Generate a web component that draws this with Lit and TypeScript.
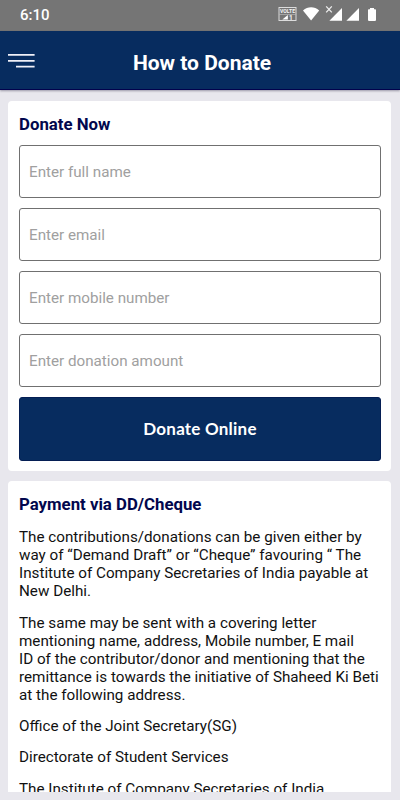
import { LitElement, html, css } from "lit";
import { customElement } from "lit/decorators.js";

const FIELDS = ["Enter full name", "Enter email", "Enter mobile number", "Enter donation amount"];

const PARAGRAPHS = [
  [
    "The contributions/donations can be given either by",
    "way of “Demand Draft” or “Cheque” favouring “ The",
    "Institute of Company Secretaries of India payable at",
    "New Delhi.",
  ],
  [
    "The same may be sent with a covering letter",
    "mentioning name, address, Mobile number, E mail",
    "ID of the contributor/donor and mentioning that the",
    "remittance is towards the initiative of Shaheed Ki Beti",
    "at the following address.",
  ],
  ["Office of the Joint Secretary(SG)"],
  ["Directorate of Student Services"],
  ["The Institute of Company Secretaries of India"],
];

@customElement("status-bar")
export class StatusBar extends LitElement {
  static styles = css`
    :host {
      display: flex;
      justify-content: space-between;
      height: 31px;
      flex: none;
      background: #757575;
      color: #fff;
    }
    .time {
      padding-left: 20px;
      font: 500 15px/31px Roboto, sans-serif;
    }
    .icons {
      width: 130px;
      height: 31px;
    }
    .tiny {
      font: 700 5.6px Roboto, sans-serif;
      fill: #f4f4f4;
    }
    .sim {
      font-size: 6.5px;
    }
  `;

  render() {
    return html`
      <span class="time">6:10</span>
      <svg class="icons" viewBox="270 0 130 31" fill="#fff">
        <rect x="279" y="7.5" width="17" height="13" fill="none" stroke="#dcdcdc" stroke-width="1" />
        <text class="tiny" x="280" y="13" textLength="15" lengthAdjust="spacingAndGlyphs">VOLTE</text>
        <path d="M279 14.5h17" stroke="#b8b8b8" stroke-width=".7" />
        <path d="M282.3 19.6h5.6v-4.6z" />
        <text class="tiny sim" x="289" y="19.7">1</text>
        <path d="M303 10.4c4.8-4.2 11.4-4.2 16.2 0L311.1 20.4z" />
        <path d="M326.2 6.4l5.6 6M331.8 6.4l-5.6 6" stroke="#eee" stroke-width="1.3" />
        <path d="M342 8v12.7h-12.6z" />
        <path d="M359 8v12.7h-12.6z" />
        <path d="M370 8h4v1.3h1.2q.8 0 .8.8v10q0 .8-.8.8h-6.4q-.8 0-.8-.8v-10q0-.8.8-.8h1.2z" />
      </svg>
    `;
  }
}

@customElement("app-header")
export class AppHeader extends LitElement {
  static styles = css`
    :host {
      display: grid;
      grid-template-columns: 40px 1fr 36px;
      align-items: center;
      height: 59px;
      flex: none;
      box-sizing: border-box;
      border-bottom: 1px solid #02024d;
      background: #072c5f;
      box-shadow: 0 1px 2px rgba(40, 35, 65, 0.4);
      z-index: 1;
    }
    .menu {
      width: 40px;
      height: 20px;
    }
    .title {
      margin: 0;
      padding-top: 5px;
      text-align: center;
      color: #fff;
      font: 700 21px/24px Roboto, sans-serif;
    }
  `;

  render() {
    return html`
      <svg class="menu" viewBox="0 0 40 20" fill="none" stroke="#f0f0f8" stroke-width="1.7">
        <path d="M8 4.9h26.6M8 10.9h26.6M16 16.6h18.6" />
      </svg>
      <h1 class="title">How to Donate</h1>
    `;
  }
}

@customElement("app-root")
export class AppRoot extends LitElement {
  static styles = css`
    :host {
      display: flex;
      flex-direction: column;
      height: 800px;
      overflow: hidden;
      background: #e8e7ed;
      font-family: Roboto, sans-serif;
    }
    .content {
      display: flex;
      flex-direction: column;
      gap: 10px;
      flex: 1;
      min-height: 0;
      margin-bottom: 8px;
      padding: 11px 9px 0 8px;
      overflow: hidden;
    }
    .card {
      flex: none;
      box-sizing: border-box;
      padding: 11px 10px 10px 11px;
      border-radius: 4px;
      background: #fff;
    }
    .form {
      height: 370px;
    }
    .heading {
      margin: 0 0 9px;
      color: #02074d;
      font-size: 16.8px;
      line-height: 24px;
      font-weight: 700;
    }
    .fields {
      display: flex;
      flex-direction: column;
      gap: 10px;
    }
    .field {
      display: block;
      width: 100%;
      height: 53px;
      box-sizing: border-box;
      margin: 0;
      padding: 1px 9px 0;
      border: 1px solid #707070;
      border-radius: 3px;
      background: #fff;
      color: #000;
      font: 400 15.2px/20px Roboto, sans-serif;
    }
    .field::placeholder {
      color: #a0a0a0;
      opacity: 1;
    }
    .submit {
      height: 64px;
      padding: 0 0 1px;
      border: 1px solid #041e54;
      border-radius: 3px;
      background: #072c5f;
      color: #fff;
      font: 700 17px/24px Lato, sans-serif;
      letter-spacing: 0.22px;
    }
    .paragraph {
      margin: 0 0 13.4px;
      color: #111;
      font-size: 15.22px;
      line-height: 18px;
      white-space: nowrap;
    }
    .line {
      display: block;
    }
    .payment .heading {
      margin-bottom: 12.3px;
    }
  `;

  render() {
    return html`
      <status-bar></status-bar>
      <app-header></app-header>
      <main class="content">
        <section class="card form">
          <h2 class="heading">Donate Now</h2>
          <div class="fields">
            ${FIELDS.map((label) => html`<input class="field" placeholder=${label} />`)}
            <button class="submit">Donate Online</button>
          </div>
        </section>
        <section class="card payment">
          <h2 class="heading">Payment via DD/Cheque</h2>
          ${PARAGRAPHS.map(
            (lines) => html`<p class="paragraph">${lines.map((line) => html`<span class="line">${line}</span>`)}</p>`
          )}
        </section>
      </main>
    `;
  }
}
